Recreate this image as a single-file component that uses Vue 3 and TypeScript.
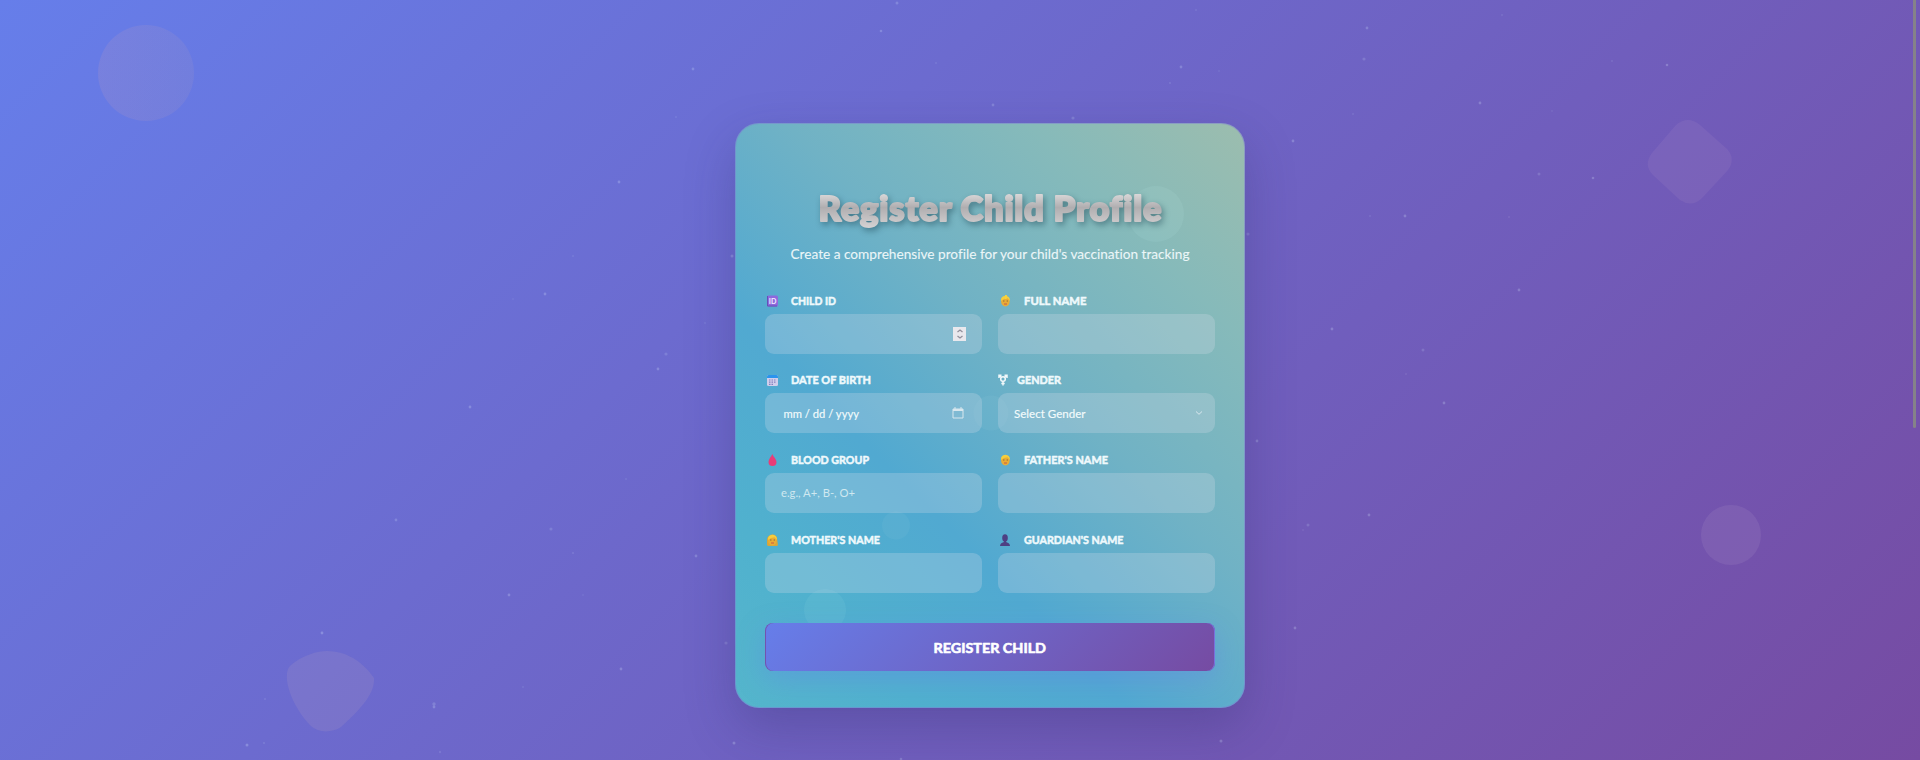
<script setup lang="ts">
interface Field { icon: string; label: string; width: number; kind?: string; short?: boolean }
const fields: Field[] = [
  { icon: 'id', label: 'CHILD ID', width: 45, kind: 'number' },
  { icon: 'baby', label: 'FULL NAME', width: 62.5 },
  { icon: 'calendar', label: 'DATE OF BIRTH', width: 80, kind: 'date' },
  { icon: 'gender', label: 'GENDER', width: 44, kind: 'select', short: true },
  { icon: 'drop', label: 'BLOOD GROUP', width: 78, kind: 'blood' },
  { icon: 'man', label: "FATHER'S NAME", width: 84 },
  { icon: 'woman', label: "MOTHER'S NAME", width: 89 },
  { icon: 'person', label: "GUARDIAN'S NAME", width: 99.5 },
]
// x, y, radius, opacity
const stars: number[][] = [
  [897, 3, 1.5, .2], [881, 31, 1.3, .22], [693, 69, 1.4, .22], [993, 105, 1.4, .2], [1073, 118, 1.6, .18],
  [619, 182, 1.4, .24], [732, 256, 1.5, .23], [545, 294, 1.4, .24], [666, 354, 1.6, .16], [658, 369, 1.4, .23],
  [470, 407, 1.4, .24], [396, 520, 1.4, .2], [551, 529, 1.6, .16], [573, 553, 1, .14], [696, 556, 1.4, .22],
  [509, 595, 1.4, .24], [322, 633, 1.4, .26], [583, 595, 1, .08], [726, 643, 1.6, .16], [621, 669, 1.4, .24],
  [434, 704, 1.7, .18], [434, 707, 1.4, .23], [523, 687, 1, .1], [247, 745, 1.5, .25], [440, 752, 1.2, .12],
  [265, 699, 1, .12], [264, 743, 1.1, .13], [734, 743, 1.5, .25], [1221, 741, 1.5, .25], [901, 759, 1.3, .2],
  [573, 256, 1.1, .1], [513, 299, 1.1, .07], [626, 479, 1, .1], [705, 323, 1.1, .1],
  [936, 63, 1.1, .1], [676, 117, 1.1, .1], [1196, 10, 1.1, .1], [1219, 71, 1, .08],
  [1367, 28, 1.4, .22], [1364, 59, 1.6, .16], [1181, 67, 1.4, .22], [1170, 83, 1.1, .13], [1293, 141, 1.4, .23],
  [1353, 114, 1.1, .1], [1502, 15, 1.1, .1], [1612, 61, 1.1, .1], [1552, 111, 1, .08],
  [1480, 103, 1.4, .23], [1667, 65, 1.3, .24], [1405, 216, 1.4, .23], [1539, 174, 1.5, .16], [1593, 178, 1.3, .23],
  [1248, 234, 1.6, .16], [1519, 290, 1.4, .23], [1332, 329, 1.4, .23], [1423, 350, 1.5, .16], [1444, 403, 1.4, .23],
  [1370, 216, 1.1, .1], [1509, 217, 1.1, .09], [1406, 374, 1.1, .09],
  [1257, 441, 1.4, .22], [1369, 515, 1.4, .23], [1308, 525, 1.5, .16], [1303, 530, 1, .09], [1295, 628, 1.4, .24],
]
</script>

<template>
  <main class="page">
    <svg class="backdrop" viewBox="0 0 1920 760">
      <defs>
        <linearGradient id="shape"><stop stop-color="#ffb0a0"/><stop offset="1" stop-color="#c8a8b0"/></linearGradient>
      </defs>
      <g opacity=".11">
        <circle cx="146" cy="73" r="48" fill="url(#shape)"/>
        <path d="M1676 125Q1688 115 1700 125L1727 149Q1736 159 1728 170L1702 198Q1692 208 1680 200L1653 175Q1643 165 1652 153Z" fill="#c5a2d5"/>
        <circle cx="1731" cy="535" r="30" fill="#d0bddb"/>
        <path d="M290 666C302 655 318 651 327 651C350 651 366 666 374 678C375 693 362 708 341 727C332 733 318 733 311 726C297 712 285 688 287 673Q287 669 290 666Z" fill="#e8c0b8"/>
      </g>
      <circle v-for="s in stars" :key="s.join('-')" :cx="s[0]" :cy="s[1]" :r="s[2]" fill="#dcecff" :opacity="s[3]"/>
    </svg>
    <div class="scroll-thumb"></div>
    <section class="card">
      <svg class="bubbles" viewBox="0 0 510 585">
        <g fill="#c5f5f2"><circle cx="420" cy="90" r="28" opacity=".09"/><circle cx="160" cy="401.500" r="14" opacity=".06"/><circle cx="89" cy="486" r="21" opacity=".08"/><circle cx="255" cy="289" r="17.500" opacity=".055"/></g>
      </svg>
      <header>
        <h1><svg class="title" viewBox="0 0 370 52">
          <defs><linearGradient id="silver" x1="0" y1="0" x2="0" y2="1"><stop stop-color="#eeecec"/><stop offset=".5" stop-color="#b0aeb0"/><stop offset="1" stop-color="#d5d2d3"/></linearGradient></defs>
          <text x="13.500" y="33" textLength="343" lengthAdjust="spacing">Register Child Profile</text>
        </svg></h1>
        <svg class="subtitle" viewBox="0 0 420 24"><text x="10.500" y="16.500" textLength="399" lengthAdjust="spacingAndGlyphs">Create a comprehensive profile for your child's vaccination tracking</text></svg>
      </header>
      <form class="fields" @submit.prevent>
        <div v-for="f in fields" :key="f.label" class="field">
          <div class="label" :class="{ short: f.short }">
            <svg class="icon" viewBox="0 0 14 14">
              <g v-if="f.icon === 'id'"><rect x="2" y="1.500" width="11" height="11" rx="1.500" fill="#8d69dd"/><path d="M2.500 2v10H12" fill="none" stroke="#6650b5"/><text x="3.800" y="9.800" class="idtext" textLength="7.500" lengthAdjust="spacingAndGlyphs">ID</text></g>
              <g v-else-if="f.icon === 'calendar'"><rect x="2" y="2" width="11" height="11" rx="1.500" fill="#d0ceeb"/><path d="M2 3.500Q2 2 3.500 2h8Q13 2 13 3.500V5H2z" fill="#2b94ed"/><path d="M4 7h7.500M4 9.200h7.500M4 11.300h5" stroke="#827fc0" stroke-width="1.200" stroke-dasharray="1.500 1"/></g>
              <path v-else-if="f.icon === 'drop'" d="M7.300 1C6 4 3.500 6.300 3.500 9a4 4 0 0 0 8 0C11.500 6.300 8.500 4 7.300 1Z" fill="#e93c78"/>
              <g v-else-if="f.icon === 'gender'" fill="none" stroke="#f1f8fa" stroke-width="1.500"><circle cx="5" cy="6" r="2.300"/><path d="M3.500 4.500 1.300 2.500M1 5V2.200h2.500M6.500 4.500 8.700 2.500M6.500 2.200H9V5M5 8v4.500M3.300 10.500h3.400"/></g>
              <g v-else-if="f.icon === 'person'" fill="#4e3f83"><ellipse cx="7" cy="5" rx="2.800" ry="3.700"/><path d="M2 13q0-3 4-4V7h2v2q4 1 4 4z"/></g>
              <g v-else>
                <path v-if="f.icon === 'woman'" d="M2 12V6q1-4 5-4.500Q11 1 12 5l1 7-1 1H3z" fill="#d7a63b"/>
                <ellipse cx="7.400" cy="7.700" rx="4.300" ry="4.800" fill="#e9ac35"/>
                <path d="M3 7Q2.500 2 7.500 1.800 12 2 12 7L9.500 4.300 6 5Z" fill="#f6ce3d"/>
                <path v-if="f.icon === 'baby'" d="M7 5V1h2l-.5 4" fill="#f6d33c"/>
                <path d="M5.200 7h1.200M8.700 7h1.200" stroke="#75593b" stroke-width=".9"/><path d="M6 10h3" stroke="#c4534b" stroke-width=".9"/>
              </g>
            </svg>
            <svg class="label-text" :viewBox="`0 0 ${f.width + 4} 16`" :width="f.width + 4" height="16"><text x="0" y="12" :textLength="f.width" lengthAdjust="spacingAndGlyphs">{{ f.label }}</text></svg>
          </div>
          <div class="input">
            <template v-if="f.kind === 'date'">
              <svg class="value" width="90" height="20"><text x="2.500" y="14.500" textLength="75.500" lengthAdjust="spacingAndGlyphs">mm / dd / yyyy</text></svg>
              <svg class="calendar-button" viewBox="0 0 12 12"><path d="M1 2h10v9H1zM3 0v3M9 0v3" fill="none" stroke="#d8e7ee"/><path d="M1 2h10v2H1z" fill="#d8e7ee"/></svg>
            </template>
            <template v-else-if="f.kind === 'select'">
              <svg class="value" width="90" height="20"><text x="0" y="14.500" textLength="71.500" lengthAdjust="spacingAndGlyphs">Select Gender</text></svg>
              <svg class="chevron" viewBox="0 0 8 8"><path d="m1 2.500 3 2.800 3-2.800" fill="none" stroke="#d8e7ee"/></svg>
            </template>
            <svg v-else-if="f.kind === 'blood'" class="value placeholder" width="90" height="20"><text x="0" y="14" textLength="74" lengthAdjust="spacingAndGlyphs">e.g., A+, B-, O+</text></svg>
            <svg v-else-if="f.kind === 'number'" class="spinner" viewBox="0 0 13 14"><path d="M0 0h13v14H0z" fill="#e9e8ed"/><path d="m4.500 5 2.500-2 2.500 2M4.500 9 7 11l2.500-2" fill="none" stroke="#918f9b" stroke-width="1.300"/></svg>
          </div>
        </div>
      </form>
      <button><svg width="120" height="20"><text x="3.500" y="15.500" textLength="112.500" lengthAdjust="spacingAndGlyphs">REGISTER CHILD</text></svg></button>
    </section>
  </main>
</template>

<style>
body { overflow: hidden; }
</style>
<style scoped>
.page { position: relative; box-sizing: border-box; height: 760px; padding: 122.500px 0 0 734.500px; overflow: hidden; background: linear-gradient(135deg, #667eea 0%, #764ba2 100%); font-family: Lato, "Noto Sans", sans-serif; font-variant-ligatures: none; }
.backdrop { position: absolute; inset: 0; width: 1920px; height: 760px; }
.scroll-thumb { position: absolute; right: 4px; top: 0; width: 3px; height: 428px; background: #858289; border-radius: 0 0 2px 2px; }
.card { position: relative; box-sizing: border-box; width: 510.500px; height: 585.500px; border: 1px solid rgba(125,125,210,.5); border-radius: 24px; padding: 64px 29.500px 0; background: linear-gradient(45deg, #55b6cc 0%, #50b1ce 17%, #51a9d1 36%, #70b2c5 58%, #86baba 80%, #9cbdae 100%) border-box; box-shadow: 0 20px 50px rgba(45,42,100,.27); }
.bubbles { position: absolute; left: 0; top: 0; width: 510px; height: 585px; }
header { position: relative; display: flex; height: 106px; flex-direction: column; align-items: center; }
h1 { margin: 0; height: 52px; }
.title { width: 370px; height: 52px; filter: drop-shadow(2px 3px 3px rgba(25,65,80,.48)); overflow: visible; }
.title text { font: 800 34.500px Lato, sans-serif; font-variant-ligatures: none; fill: url(#silver); stroke: url(#silver); stroke-width: 1.800px; stroke-linejoin: round; paint-order: stroke; }
.subtitle { width: 420px; height: 24px; margin-top: 2px; }
.subtitle text { font-size: 14px; fill: #ebf6f8; stroke: #ebf6f8; stroke-width: .1px; }
.fields { position: relative; display: grid; grid-template-columns: 217px 217px; column-gap: 16px; grid-auto-rows: 79.750px; }
.label { display: flex; height: 16px; padding-bottom: 4px; align-items: center; gap: 11.500px; transform: translateY(-1px); }
.label.short { gap: 4.500px; }
.icon { width: 14px; height: 14px; flex: none; }
.label-text { overflow: visible; }
.label-text text { font: 700 10.800px Lato, sans-serif; fill: #eff9fc; stroke: #eff9fc; stroke-width: .5px; stroke-linejoin: round; }
.idtext { font: 700 6.500px Lato, sans-serif; fill: #f2eaff; }
.input { display: flex; box-sizing: border-box; height: 40px; align-items: center; justify-content: space-between; padding: 0 16px; border-radius: 9px; background: rgba(220,225,235,.25); }
.value text { font-size: 12px; fill: #f2fbfc; stroke: #f2fbfc; stroke-width: .15px; }
.value.placeholder text { fill: #cfe8f0; stroke: none; font-weight: 400; }
.calendar-button { width: 12px; height: 12px; margin-right: 2.500px; }
.chevron { width: 8px; height: 8px; margin-right: -4px; }
.spinner { width: 13px; height: 14px; margin-left: auto; }
button { position: relative; display: flex; width: 449.500px; height: 48px; margin-top: 10px; padding: 0; align-items: center; justify-content: center; border: 0; border-radius: 8px; background: linear-gradient(135deg, #667eea, #764ba2); box-shadow: inset 1px 0 #7353ae, inset -1px 0 #7871dc, 0 9px 28px rgba(102,126,234,.35); }
button text { font: 700 13.800px Lato, sans-serif; fill: white; stroke: white; stroke-width: .6px; stroke-linejoin: round; }
</style>
